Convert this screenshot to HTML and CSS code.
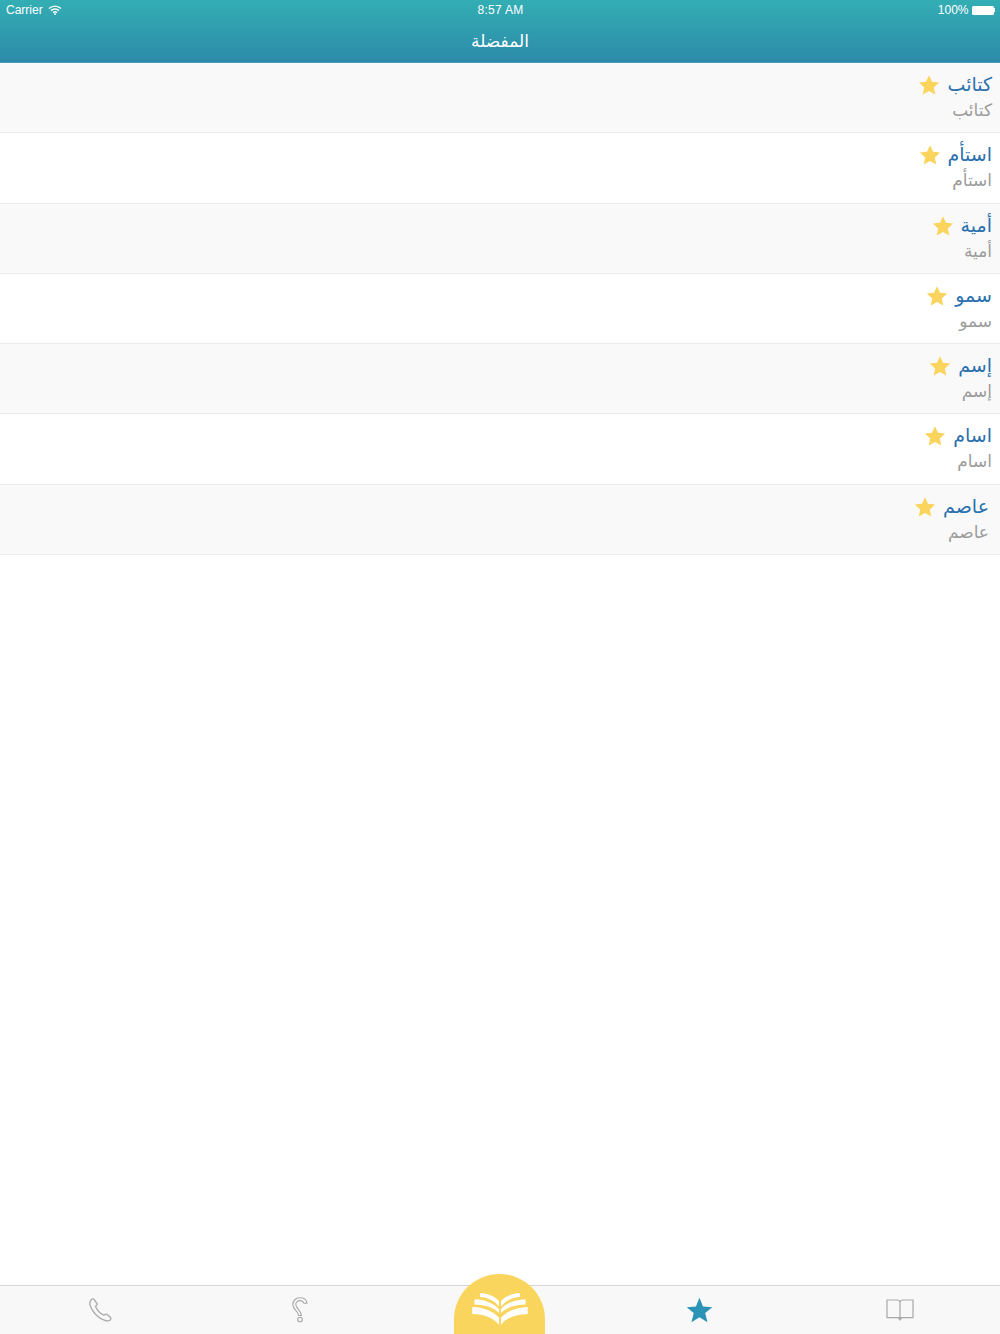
FILE: index.html
```html
<!DOCTYPE html>
<html lang="ar">
<head>
<meta charset="utf-8">
<title>المفضلة</title>
<link rel="stylesheet" href="styles.css">
</head>
<body>
<div class="app">
  <header class="header">
    <div class="status">
      <div class="status-left"><span>Carrier</span>
        <svg class="wifi" viewBox="0 0 14 10"><path d="M1 3.6C4.6.4 9.4.4 13 3.6" /><path d="M3 5.6c2.4-2 5.6-2 8 0" /><path d="M5 7.6c1.2-1 2.8-1 4 0" /><circle cx="7" cy="9" r=".9"/></svg>
      </div>
      <div class="status-time">8:57 AM</div>
      <div class="status-right"><span>100%</span><span class="battery"></span><span class="battery-tip"></span></div>
    </div>
    <div class="title" dir="rtl">المفضلة</div>
  </header>
  <main class="list">
    <div class="row"><div class="head"><span class="word">كتائب</span><svg class="star" viewBox="0 0 24 24"><path d="M12 2.200l3 6.600 7.100.8-5.300 4.800 1.500 7.100-6.300-3.600-6.300 3.600 1.500-7.100L1.900 9.600l7.100-.8z"/></svg></div><div class="sub" dir="rtl">كتائب</div></div>
    <div class="row"><div class="head"><span class="word">استأم</span><svg class="star" viewBox="0 0 24 24"><path d="M12 2.200l3 6.600 7.100.8-5.300 4.800 1.500 7.100-6.300-3.600-6.300 3.600 1.500-7.100L1.900 9.600l7.100-.8z"/></svg></div><div class="sub" dir="rtl">استأم</div></div>
    <div class="row"><div class="head"><span class="word">أمية</span><svg class="star" viewBox="0 0 24 24"><path d="M12 2.200l3 6.600 7.100.8-5.300 4.800 1.500 7.100-6.300-3.600-6.300 3.600 1.500-7.100L1.900 9.600l7.100-.8z"/></svg></div><div class="sub" dir="rtl">أمية</div></div>
    <div class="row"><div class="head"><span class="word">سمو</span><svg class="star" viewBox="0 0 24 24"><path d="M12 2.200l3 6.600 7.100.8-5.300 4.800 1.500 7.100-6.300-3.600-6.300 3.600 1.500-7.100L1.900 9.600l7.100-.8z"/></svg></div><div class="sub" dir="rtl">سمو</div></div>
    <div class="row"><div class="head"><span class="word">إسم</span><svg class="star" viewBox="0 0 24 24"><path d="M12 2.200l3 6.600 7.100.8-5.300 4.800 1.500 7.100-6.300-3.600-6.300 3.600 1.500-7.100L1.900 9.600l7.100-.8z"/></svg></div><div class="sub" dir="rtl">إسم</div></div>
    <div class="row"><div class="head"><span class="word">اسام</span><svg class="star" viewBox="0 0 24 24"><path d="M12 2.200l3 6.600 7.100.8-5.300 4.800 1.500 7.100-6.300-3.600-6.300 3.600 1.500-7.100L1.900 9.600l7.100-.8z"/></svg></div><div class="sub" dir="rtl">اسام</div></div>
    <div class="row row-last"><div class="head"><span class="word">عاصم</span><svg class="star" viewBox="0 0 24 24"><path d="M12 2.200l3 6.600 7.100.8-5.300 4.800 1.500 7.100-6.300-3.600-6.300 3.600 1.500-7.100L1.900 9.600l7.100-.8z"/></svg></div><div class="sub" dir="rtl">عاصم</div></div>
  </main>
  <nav class="tabbar">
    <div class="tab">
      <svg class="icon-phone" viewBox="-1 0 24 24"><path d="M2.600 1.300c1-.7 2.200-.5 2.800.5l2.400 3.500c.5.8.3 1.700-.4 2.300l-.9.8c1.500 3.600 4.500 6.800 8.400 8.900l1.100-.8c.8-.5 1.700-.4 2.400.2l2.900 2.500c.8.8.8 2-.1 2.700-1.500 1.100-3.500 1.300-5.300.5C9.300 20 3.800 14.400 1.200 7.700.4 5.300 1 2.900 2.600 1.300z"/></svg>
    </div>
    <div class="tab">
      <svg class="icon-help" viewBox="0 0 16 26"><path d="M15 6.200C14.500 2.800 11.500.8 8 .8 3.500.8.800 3.800.8 7.500c0 3.500 2.700 5.500 4.200 7.500 1 1.300 1.400 2.300 1.600 3.500h2.800C9.200 16 8 14.400 6.600 12.600 5.200 10.800 3.800 9.600 3.800 7.500c0-2.300 1.800-3.900 4.200-3.900 1.800 0 3.200.8 4 2.600z"/><circle cx="8" cy="22.500" r="2.300"/></svg>
    </div>
    <div class="tab tab-center">
      <div class="dome">
        <svg class="icon-book" viewBox="0 0 58 34"><path d="M8.600 1c7.400.5 15 3 19.400 8.500V15C23 9 16.500 5.600 8.200 5.200z"/><path d="M49.400 1C42 1.500 34.400 4 30 9.500V15c5-6 11.500-9.400 19.800-9.800z"/><path d="M2.800 7.400c9.700.4 19.200 3.400 25.200 10.400v3.900C22 15.400 13 13 2.300 12.800z"/><path d="M55.200 7.400c-9.700.4-19.200 3.400-25.200 10.400v3.900c6-6.300 15-8.700 25.700-8.900z"/><path d="M.3 15.400c11 .3 21 3.800 27.700 11V34C22 26 12 22.900.2 22.600z"/><path d="M57.700 15.400c-11 .3-21 3.800-27.700 11V34c6-8 16-11.100 27.800-11.400z"/></svg>
      </div>
    </div>
    <div class="tab">
      <svg class="icon-fav" viewBox="1 0 26 26"><path d="M13 .8l3.400 8.300 9 .7-6.900 5.700 2.200 8.800L13 19.500 5.300 24.300l2.200-8.800L.6 9.800l9-.7z"/></svg>
    </div>
    <div class="tab">
      <svg class="icon-open" viewBox="0 0 28 22"><path d="M14 3V18.700M1 1h9.500c2 0 3.500.7 3.500 2 0-1.300 1.500-2 3.500-2H27v17.700H1z"/><path d="M12.500 19l1.500 2 1.500-2z"/></svg>
    </div>
  </nav>
</div>
</body>
</html>
```

FILE: styles.css
```css
* { box-sizing: border-box; }
html, body { margin: 0; padding: 0; }
body {
  width: 1000px;
  height: 1334px;
  overflow: hidden;
  background: #fff;
  font-family: "DejaVu Sans", "Noto Sans", sans-serif;
}
.app { display: flex; flex-direction: column; height: 1334px; }

.header {
  height: 63px;
  flex: none;
  display: flex;
  flex-direction: column;
  color: #fff;
  background: linear-gradient(#33aeb4, #2c8aa9);
  border-bottom: 1px solid #4a9db8;
}
.status {
  height: 20px;
  flex: none;
  display: grid;
  grid-template-columns: 1fr auto 1fr;
  align-items: center;
  padding: 0 5px 0 6px;
  font-family: "Liberation Sans", sans-serif;
  font-size: 12px;
}
.status-left { display: flex; align-items: center; gap: 5px; }
.wifi { width: 14px; height: 10px; fill: #fff; stroke: none; }
.wifi path { fill: none; stroke: #fff; stroke-width: 1.4; }
.status-time { letter-spacing: .3px; }
.status-right { display: flex; align-items: center; justify-content: flex-end; gap: 3px; }
.battery { width: 22px; height: 9px; background: #fff; border-radius: 1.500px; }
.battery-tip { width: 1.500px; height: 4px; background: #fff; margin-left: -3px; }
.title {
  height: 42px;
  flex: none;
  text-align: center;
  font-size: 17px;
  line-height: 42px;
}

.list { flex: none; }
.row {
  height: 70.300px;
  border-bottom: 1px solid #ececec;
  padding: 9px 8px 0;
  display: flex;
  flex-direction: column;
  align-items: flex-end;
}
.row:nth-child(odd) { background: #f9f9f9; }
.row-last { padding-right: 11px; }
.head { display: flex; flex-direction: row-reverse; align-items: center; gap: 6px; height: 24px; }
.word { direction: rtl; font-size: 19px; color: #2a70ae; line-height: 24px; }
.star { width: 24px; height: 24px; fill: #fad45c; display: block; margin-top: 2px; }
.sub { direction: rtl; font-size: 17px; color: #9c9c9c; line-height: 20px; margin-top: 4px; }

.tabbar {
  margin-top: auto;
  height: 49px;
  flex: none;
  display: grid;
  grid-template-columns: repeat(5, 1fr);
  background: #f8f8f8;
  border-top: 1px solid #d4d4d4;
}
.tab { display: flex; align-items: center; justify-content: center; position: relative; }
.icon-phone { width: 24px; height: 24px; fill: none; stroke: #a9a9a9; stroke-width: 1.300; }
.icon-help { width: 16px; height: 26px; fill: none; stroke: #a9a9a9; stroke-width: 1.100; }
.icon-fav { width: 27px; height: 27px; fill: #2a93b6; }
.icon-open { width: 28px; height: 22px; fill: none; stroke: #a8a8a8; stroke-width: 1.200; }
.dome {
  position: absolute;
  left: 50%;
  bottom: 0;
  margin-left: -46px;
  width: 91px;
  height: 60px;
  background: #fad55e;
  border-radius: 46px 46px 0 0;
  display: flex;
  justify-content: center;
  padding-top: 18px;
}
.icon-book { width: 56px; height: 33px; fill: #fff; }
```
